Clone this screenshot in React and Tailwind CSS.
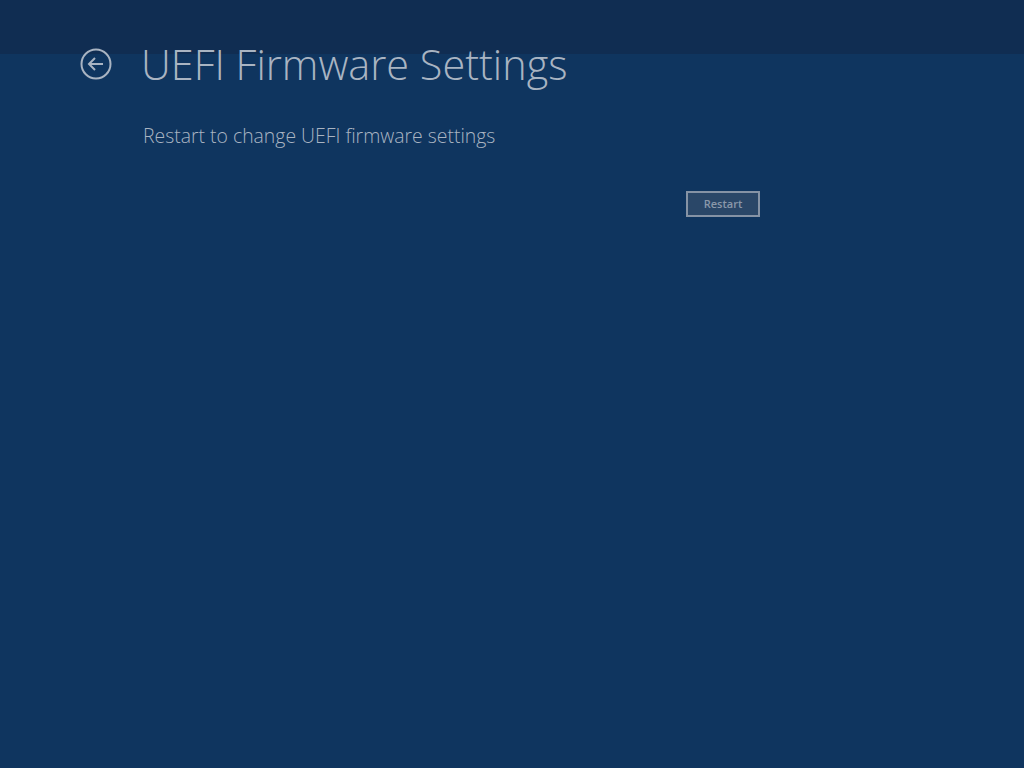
export default function App() {
  return (
    <div className="w-[1024px] h-[768px] bg-[#0f355f] flex flex-col overflow-hidden" style={{ fontFamily: '"Open Sans", "Noto Sans", sans-serif' }}>
      <div className="h-[54px] bg-[#102d52] shrink-0"></div>
      <div className="flex flex-col -mt-[54px]">
        <div className="flex items-center pl-[80px] pt-[38px]">
          <svg width="32" height="32" viewBox="0 0 32 32" className="shrink-0">
            <circle cx="16" cy="16" r="14.5" fill="none" stroke="#a9b4c2" strokeWidth="2" />
            <path d="M23 16 H9 M15 10 L9 16 L15 22" fill="none" stroke="#a9b4c2" strokeWidth="2" />
          </svg>
          <div className="ml-[29px] text-[41.4px] font-light leading-[52px] text-[#a9b4c2]">UEFI Firmware Settings</div>
        </div>
        <div className="pl-[143px] mt-[33px] text-[19.4px] font-light text-[#a9b4c2] leading-[26px]">Restart to change UEFI firmware settings</div>
        <div className="pl-[686px] mt-[42px]">
          <div className="w-[74px] h-[26px] border-2 border-[#8593a5] bg-[#2a4768] flex items-center justify-center text-[11px] font-semibold text-[#8a98aa]">Restart</div>
        </div>
      </div>
    </div>
  );
}
